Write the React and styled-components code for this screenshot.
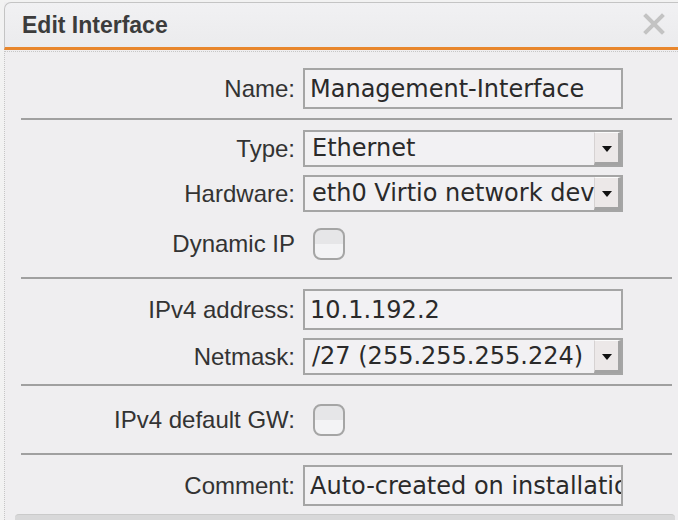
import React from 'react';
import styled, {createGlobalStyle} from 'styled-components';

const GlobalStyle = createGlobalStyle`
  html, body {
    margin: 0;
    padding: 0;
    background: #f2f2f2;
    overflow: hidden;
  }
  body {
    font-family: "Liberation Sans", Arial, sans-serif;
  }
`;

const Window = styled.div`
  margin: 2px 0 0 4px;
  width: 674px;
  height: 518px;
  display: flex;
  flex-direction: column;
  background: #efeef0;
`;

const TitleBar = styled.div`
  height: 44px;
  display: flex;
  align-items: center;
  justify-content: space-between;
  padding: 0 13px 0 17px;
  border-top: 1px solid #c4c4c4;
  border-left: 1px solid #c4c4c4;
  border-top-left-radius: 7px;
  border-bottom: 3px solid #e8862c;
  background: linear-gradient(#f1f1f3, #ebebed);
`;

const Title = styled.span`
  font-weight: bold;
  font-size: 23px;
  color: #3c3c3c;
`;

const CloseButton = styled.svg`
  width: 22px;
  height: 22px;
  margin-top: -2px;
`;

const Body = styled.div`
  flex: 1;
  display: flex;
  flex-direction: column;
  margin-top: 1px;
  border-top: 1px dotted #c6c6c6;
  border-left: 1px dotted #c6c6c6;
`;

const Section = styled.div`
  display: flex;
  flex-direction: column;
  gap: 8px;
  padding: ${p => (p.$first ? '16px' : '10px')} 0 ${p => (p.$last ? '8px' : '9px')};
`;

const Separator = styled.div`
  height: 2px;
  margin: 0 6px 0 16px;
  background: #a0a0a0;
`;

const Row = styled.div`
  display: grid;
  grid-template-columns: 290px 320px;
  column-gap: 8px;
  align-items: center;
  height: ${p => (p.$check ? '48px' : 'auto')};
`;

const Label = styled.label`
  text-align: right;
  font-size: 24px;
  color: #333;
  white-space: nowrap;
`;

const TextField = styled.input`
  box-sizing: border-box;
  width: 320px;
  height: 41px;
  padding: 0 0 0 5px;
  border: 2px solid #a5a5a5;
  background: #f2f1f3;
  font-family: "DejaVu Sans", sans-serif;
  font-size: 24px;
  color: #2a2a2a;
  outline: none;
`;

const SelectBox = styled.div`
  box-sizing: border-box;
  width: 320px;
  height: 37px;
  display: flex;
  align-items: stretch;
  border: 2px solid #a5a5a5;
  background: #f2f1f3;
`;

const SelectValue = styled.span`
  flex: 1;
  overflow: hidden;
  white-space: nowrap;
  padding-left: 7px;
  font-family: "DejaVu Sans", sans-serif;
  font-size: 24px;
  line-height: 33px;
  color: #2a2a2a;
`;

const ArrowButton = styled.span`
  box-sizing: border-box;
  width: 27px;
  display: flex;
  align-items: center;
  justify-content: center;
  background: #ece8e8;
  border-top: 1px solid #fbfbfb;
  border-left: 1px solid #d6d2d2;
  border-right: 3px solid #a3a3a3;
  border-bottom: 3px solid #a3a3a3;
  &::after {
    content: '';
    border-left: 5px solid transparent;
    border-right: 5px solid transparent;
    border-top: 6px solid #111;
    margin-top: 2px;
  }
`;

const CheckBox = styled.input`
  appearance: none;
  margin: 0 0 0 10px;
  width: 32px;
  height: 32px;
  box-sizing: border-box;
  border: 2px solid #a5a5a5;
  border-radius: 8px;
  background: linear-gradient(#e6e6e8 50%, #f3f3f5 50%);
`;

const Footer = styled.div`
  flex: 1;
  margin: 0 3px 0 10px;
  background: #d8d8d9;
  border-top: 1px solid #cacaca;
  border-radius: 4px 4px 0 0;
`;

const Select = ({value}) => (
  <SelectBox>
    <SelectValue>{value}</SelectValue>
    <ArrowButton/>
  </SelectBox>
);

export default function App() {
  return (
    <>
      <GlobalStyle/>
      <Window>
        <TitleBar>
          <Title>Edit Interface</Title>
          <CloseButton viewBox='0 0 22 22'>
            <path d='M3 3 L19 19 M19 3 L3 19' stroke='#c3c3c3' strokeWidth='4' strokeLinecap='square'/>
          </CloseButton>
        </TitleBar>
        <Body>
          <Section $first>
            <Row>
              <Label>Name:</Label>
              <TextField readOnly value='Management-Interface'/>
            </Row>
          </Section>
          <Separator/>
          <Section>
            <Row>
              <Label>Type:</Label>
              <Select value='Ethernet'/>
            </Row>
            <Row>
              <Label>Hardware:</Label>
              <Select value='eth0 Virtio network device'/>
            </Row>
            <Row $check>
              <Label>Dynamic IP</Label>
              <CheckBox type='checkbox'/>
            </Row>
          </Section>
          <Separator/>
          <Section>
            <Row>
              <Label>IPv4 address:</Label>
              <TextField readOnly value='10.1.192.2'/>
            </Row>
            <Row>
              <Label>Netmask:</Label>
              <Select value='/27 (255.255.255.224)'/>
            </Row>
          </Section>
          <Separator/>
          <Section>
            <Row $check>
              <Label>IPv4 default GW:</Label>
              <CheckBox type='checkbox'/>
            </Row>
          </Section>
          <Separator/>
          <Section $last>
            <Row>
              <Label>Comment:</Label>
              <TextField readOnly value='Auto-created on installation'/>
            </Row>
          </Section>
          <Footer/>
        </Body>
      </Window>
    </>
  );
}
